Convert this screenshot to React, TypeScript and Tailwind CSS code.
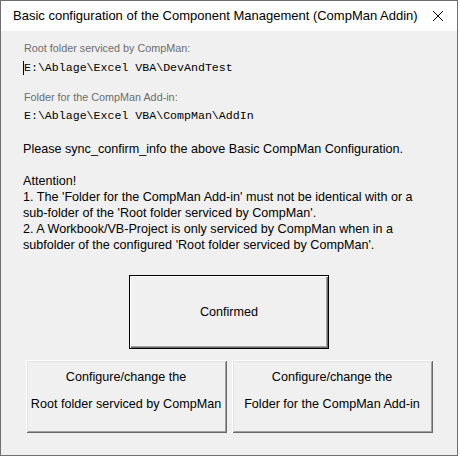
import React from "react";

const ui = { fontFamily: '"Liberation Sans", Arial, sans-serif' };
const mono = { fontFamily: '"Liberation Mono", "Courier New", monospace' };

export default function App() {
  return (
    <div className="w-[460px] h-[457px] bg-white">
      <div className="w-[458px] h-[456px] border border-[#6f6f6f] flex flex-col" style={ui}>
        <div className="h-[30px] bg-white flex items-center justify-between pl-[12px] pr-[10px] text-[13px] text-black">
          <span>Basic configuration of the Component Management (CompMan Addin)</span>
          <svg width="12" height="12" viewBox="0 0 12 12" className="mr-[3px]">
            <path d="M1 1L11 11M11 1L1 11" stroke="#000" strokeWidth="1" />
          </svg>
        </div>
        <div className="flex-1 bg-[#f0f0f0] flex flex-col px-[22px] pt-[9px] text-[12.6px] leading-[16px] text-black">
          <div className="text-[10.8px] leading-[16px] text-[#6d6d6d] pl-px">Root folder serviced by CompMan:</div>
          <div className="mt-[4px] text-[11.6px] leading-[16px] flex items-center text-black" style={mono}>
            <span className="inline-block w-px h-[14px] bg-black" />
            <span>E:\Ablage\Excel VBA\DevAndTest</span>
          </div>
          <div className="mt-[13px] text-[10.8px] leading-[16px] text-[#6d6d6d] pl-px">Folder for the CompMan Add-in:</div>
          <div className="mt-[3px] text-[11.6px] leading-[16px] pl-px text-black" style={mono}>
            E:\Ablage\Excel VBA\CompMan\AddIn
          </div>
          <div className="mt-[17px]">Please sync_confirm_info the above Basic CompMan Configuration.</div>
          <div className="mt-[16px]">Attention!</div>
          <div>1. The 'Folder for the CompMan Add-in' must not be identical with or a</div>
          <div>sub-folder of the 'Root folder serviced by CompMan'.</div>
          <div>2. A Workbook/VB-Project is only serviced by CompMan when in a</div>
          <div>subfolder of the configured 'Root folder serviced by CompMan'.</div>

          <div className="mt-[22px] self-center w-[200px] h-[74px] border border-black bg-[#f0f0f0] flex items-center justify-center shadow-[inset_1px_1px_0_#ffffff,inset_-1px_-1px_0_#696969,inset_-2px_-2px_0_#a0a0a0]">
            Confirmed
          </div>

          <div className="mt-[11px] flex justify-center gap-[5px]">
            <div className="w-[201px] h-[73px] bg-[#f0f0f0] flex flex-col items-center pt-[9px] gap-[11px] shadow-[inset_1px_1px_0_#ffffff,inset_-1px_-1px_0_#696969,inset_2px_2px_0_#e3e3e3,inset_-2px_-2px_0_#a0a0a0]">
              <span>Configure/change the</span>
              <span>Root folder serviced by CompMan</span>
            </div>
            <div className="w-[201px] h-[73px] bg-[#f0f0f0] flex flex-col items-center pt-[9px] gap-[11px] shadow-[inset_1px_1px_0_#ffffff,inset_-1px_-1px_0_#696969,inset_2px_2px_0_#e3e3e3,inset_-2px_-2px_0_#a0a0a0]">
              <span>Configure/change the</span>
              <span>Folder for the CompMan Add-in</span>
            </div>
          </div>
        </div>
      </div>
    </div>
  );
}
